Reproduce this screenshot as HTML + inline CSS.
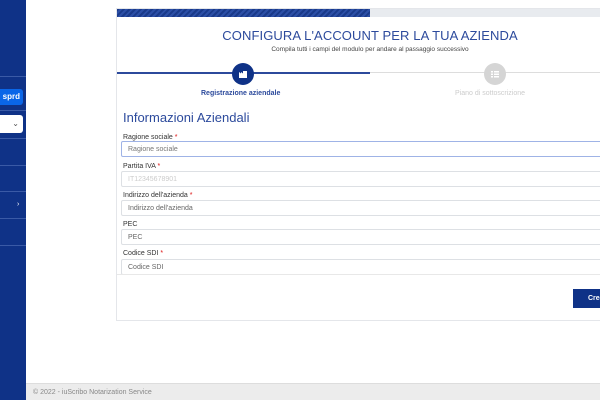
<!DOCTYPE html>
<html><head><meta charset="utf-8"><style>
*{margin:0;padding:0;box-sizing:border-box}
body{width:600px;height:400px;overflow:hidden;background:#fff;font-family:"Liberation Sans",sans-serif;position:relative}
.sb{position:absolute;left:0;top:0;width:26px;height:400px;background:#0f3287}
.ln{position:absolute;left:0;width:26px;height:1px;background:#3a5aa6}
.spid{position:absolute;left:0;top:89px;width:23px;height:16px;background:#0a66e8;border-radius:0 3px 3px 0;color:#fff;font-size:8px;font-weight:bold;line-height:16px;text-align:right;padding-right:3px}
.sel{position:absolute;left:0;top:115px;width:23px;height:18px;background:#fff;border-radius:0 3px 3px 0;color:#555;font-size:8px;line-height:18px;text-align:right;padding-right:4px}
.card{position:absolute;left:116px;top:8px;width:500px;height:313px;border:1px solid #e4e6ea;background:#fff}
.pb{position:absolute;left:0;top:0;width:500px;height:8px;background:#e8ebef}
.pbf{position:absolute;left:0;top:0;width:253px;height:8px;background:repeating-linear-gradient(135deg,#1a3a8a 0 2px,#2c4fa6 2px 4px)}
h1{position:absolute;left:0;width:506px;top:19px;text-align:center;font-weight:normal;font-size:13px;color:#2c4a9c;letter-spacing:.1px}
.sub{position:absolute;left:0;width:506px;top:37px;text-align:center;font-size:6.5px;color:#444}
.sl{position:absolute;top:63px;height:1.5px}
.dot{position:absolute;top:54px;width:22px;height:22px;border-radius:50%}
.st{position:absolute;top:81px;font-size:7px;font-weight:bold}
h2{position:absolute;left:6px;top:101px;font-weight:normal;font-size:13px;color:#2c4a9c}
.lb{position:absolute;left:6px;font-size:7px;color:#333}
.lb b{color:#d11;font-weight:normal}
.in{position:absolute;left:4px;width:490px;height:16px;border:1px solid #dde0e4;border-radius:2px;font-size:7px;color:#666;padding-left:6px;line-height:15px}
.btn{position:absolute;left:456px;top:280px;width:40px;height:19px;background:#0f3287;color:#fff;font-size:7px;font-weight:bold;line-height:19px;padding-left:15px}
.ft{position:absolute;left:26px;top:383px;width:574px;height:17px;background:#ececec;border-top:1px solid #ddd;font-size:7px;color:#888;line-height:17px;padding-left:7px}
</style></head><body>
<div class="sb"></div>
<div class="ln" style="top:76px"></div><div class="ln" style="top:110px"></div><div class="ln" style="top:138px"></div><div class="ln" style="top:165px"></div><div class="ln" style="top:191px"></div><div class="ln" style="top:218px"></div><div class="ln" style="top:245px"></div>
<div class="spid">sprd</div>
<div class="sel">⌄</div>
<div style="position:absolute;left:17px;top:201px;color:#fff;font-size:7px">›</div>
<div class="card">
<div class="pb"></div><div class="pbf"></div>
<h1>CONFIGURA L'ACCOUNT PER LA TUA AZIENDA</h1>
<div class="sub">Compila tutti i campi del modulo per andare al passaggio successivo</div>
<div class="sl" style="left:0;width:253px;background:#2c4a9c"></div>
<div class="sl" style="left:253px;width:250px;background:#ddd;height:1px"></div>
<div class="dot" style="left:115px;background:#0f3287"><svg width="22" height="22"><path d="M7 15V9l2 1.5V9l2 1.5V8h4v7z" fill="#fff"/></svg></div>
<div class="dot" style="left:367px;background:#d5d5d5"><svg width="22" height="22"><g fill="#fff"><rect x="7" y="8" width="2" height="1.5"/><rect x="10" y="8" width="5" height="1.5"/><rect x="7" y="10.5" width="2" height="1.5"/><rect x="10" y="10.5" width="5" height="1.5"/><rect x="7" y="13" width="2" height="1.5"/><rect x="10" y="13" width="5" height="1.5"/></g></svg></div>
<div class="st" style="left:84px;color:#2c4a9c">Registrazione aziendale</div>
<div class="st" style="left:338px;color:#ccc;font-weight:normal">Piano di sottoscrizione</div>
<h2>Informazioni Aziendali</h2>
<div class="lb" style="top:125px">Ragione sociale <b>*</b></div>
<div class="in" style="top:132px;border-color:#9fb3e6;color:#777">Ragione sociale</div>
<div class="lb" style="top:154px">Partita IVA <b>*</b></div>
<div class="in" style="top:162px;color:#ccc">IT12345678901</div>
<div class="lb" style="top:183px">Indirizzo dell'azienda <b>*</b></div>
<div class="in" style="top:191px">Indirizzo dell'azienda</div>
<div class="lb" style="top:212px">PEC</div>
<div class="in" style="top:220px">PEC</div>
<div class="lb" style="top:241px">Codice SDI <b>*</b></div>
<div class="in" style="top:250px">Codice SDI</div>
<div style="position:absolute;left:0;top:265px;width:500px;height:1px;background:#e8e8e8"></div>
<div class="btn">Crea</div>
</div>
<div class="ft">© 2022 - iuScribo Notarization Service</div>
</body></html>
